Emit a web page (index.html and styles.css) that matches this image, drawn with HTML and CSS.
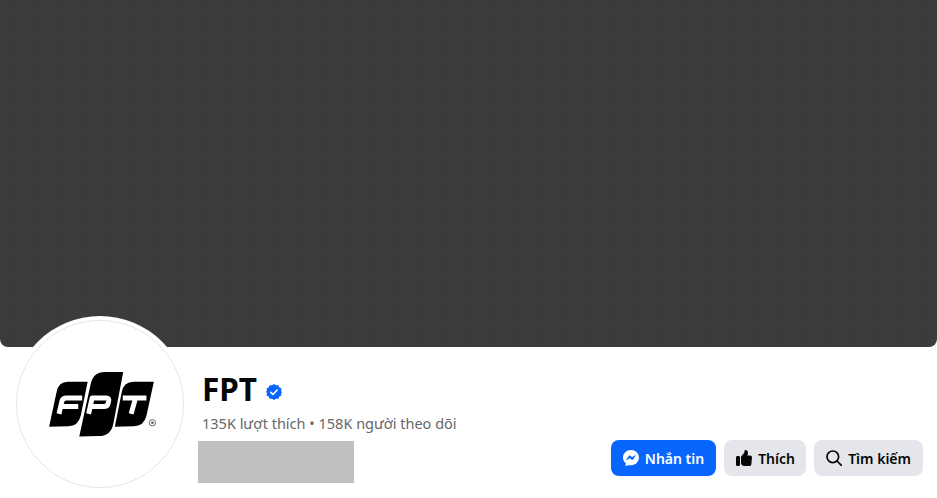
FILE: index.html
```html
<!DOCTYPE html>
<html lang="vi">
<head>
<meta charset="utf-8">
<title>FPT</title>
<link rel="stylesheet" href="styles.css">
</head>
<body>
<div class="cover"></div>
<header class="profile">
  <div class="avatar">
    <svg class="logo" viewBox="16 320 168 168" aria-label="FPT logo">
      <path class="panel" d="M48.500 427 L56 392 Q58 381.500 67.500 381.500 L87.500 381.500 L80.500 416 Q78 426.500 68 426.500 Z"/>
      <path class="panel" d="M79 437 L90.500 384 Q93 371.500 105 371.500 L123.500 371.500 L113.500 424 Q111 436.500 99 436.500 Z"/>
      <path class="panel" d="M115 427 L122 392 Q124 381.500 134 381.500 L154.500 381.500 L147 416 Q144.500 426.500 134 426.500 Z"/>
      <path class="mark" d="M58.500 414 L61.500 401 Q62.500 398 66 398 L82 398 M60.500 406.500 L78 406.500"/>
      <path class="mark" d="M88.500 414 L92 398 L106.500 398 Q109.500 398 108.800 401 L108 404 Q107.300 406.500 104 406.500 L91 406.500"/>
      <path class="mark" d="M123 398 L147 398 M136 398 L131.500 414"/>
      <circle class="reg" cx="153" cy="423" r="3.200"/>
      <circle class="reg-dot" cx="153" cy="423" r="1.300"/>
    </svg>
  </div>
  <div class="info">
    <div class="title-row">
      <h1 class="name">FPT</h1>
      <svg class="badge" viewBox="0 0 16 16" aria-label="Đã xác minh">
        <path class="badge-fill" d="M8 0 L10 1.300 L12.400 1.200 L13.400 3.400 L15.500 4.500 L15 6.900 L16 8 L15 10.100 L15.500 11.500 L13.400 12.600 L12.400 14.800 L10 14.700 L8 16 L6 14.700 L3.600 14.800 L2.600 12.600 L0.500 11.500 L1 9.100 L0 8 L1 5.900 L0.500 4.500 L2.600 3.400 L3.600 1.200 L6 1.300 Z"/>
        <path class="badge-check" d="M4.800 8.300 L7 10.400 L11.200 6"/>
      </svg>
    </div>
    <p class="stats">135K lượt thích • 158K người theo dõi</p>
    <div class="redacted"></div>
  </div>
  <div class="actions">
    <button class="btn btn-primary" type="button">
      <svg class="icon" viewBox="0 0 16 16"><path class="fill-white" d="M8 0C3.600 0 0 3.300 0 7.500c0 2.300 1 4.200 2.700 5.600v2.500c0 .3.300.5.600.4l2.500-1.100c.7.200 1.400.3 2.200.3 4.400 0 8-3.300 8-7.700C16 3.300 12.400 0 8 0z"/><path class="fill-blue" d="M3.300 9.800 5.700 6c.3-.5 1-.6 1.400-.3l1.900 1.400c.2.100.4.100.5 0l2.500-1.900c.3-.3.800.1.600.4l-2.400 3.800c-.3.500-1 .6-1.400.3L6.900 8.300c-.2-.1-.4-.1-.5 0L3.900 10.200c-.3.300-.8-.1-.6-.4z"/></svg>
      Nhắn tin
    </button>
    <button class="btn btn-like" type="button">
      <svg class="icon" viewBox="0 0 16 16"><path class="fill-dark" d="M0 7.500C0 6.700.6 6 1.400 6h1.200c.8 0 1.400.7 1.400 1.500v7c0 .8-.6 1.500-1.400 1.500H1.400C.6 16 0 15.300 0 14.500zM5 7.300c0-.5.200-.9.500-1.300l2.200-2.600c.5-.6.800-1.300.8-2.100V1c0-.6.500-1 1.100-1 1.400 0 2.400 1.200 2.400 2.700 0 .9-.3 1.900-.7 2.800h2.800c1.100 0 2 1 1.900 2.100l-.6 5.600C15.700 14.900 14.500 16 13 16H8.300c-.9 0-1.700-.3-2.400-.9-.6-.5-.9-1.200-.9-2z"/></svg>
      Thích
    </button>
    <button class="btn" type="button">
      <svg class="icon" viewBox="0 0 16 16"><circle class="stroke-dark" cx="6.800" cy="6.800" r="5.800"/><path class="stroke-dark" d="M11 11 L15.500 15.500"/></svg>
      Tìm kiếm
    </button>
  </div>
</header>
</body>
</html>
```
FILE: styles.css
```css
* { box-sizing: border-box; }
html, body { margin: 0; padding: 0; background: #fff; }
body {
  width: 937px;
  height: 498px;
  overflow: hidden;
  font-family: "Noto Sans", "Open Sans", "Liberation Sans", sans-serif;
}
.cover {
  height: 347px;
  background-color: #3b3b3b;
  background-image: conic-gradient(#3c3c3c 25%, #3a3a3a 0 50%, #3c3c3c 0 75%, #3a3a3a 0);
  background-size: 3px 3px;
  border-radius: 0 0 8px 8px;
}
.profile {
  display: flex;
  align-items: flex-start;
  padding: 0 14px 0 12px;
}
.avatar {
  flex: none;
  width: 176px;
  height: 176px;
  margin-top: -31px;
  padding: 4px;
  background: #fff;
  border-radius: 50%;
  position: relative;
}
.logo {
  display: block;
  width: 168px;
  height: 168px;
  border: 1px solid #e6e6e6;
  border-radius: 50%;
  background: #fff;
}
.panel { fill: #000; }
.mark { fill: none; stroke: #fff; stroke-width: 5; stroke-linejoin: round; }
.reg { fill: none; stroke: #444; stroke-width: .8; }
.reg-dot { fill: #555; }
.info {
  flex: none;
  width: 262px;
  margin-left: 10px;
  padding-top: 23px;
}
.title-row {
  display: flex;
  align-items: center;
  gap: 9px;
  padding-left: 4px;
  height: 38px;
}
.name {
  margin: 0;
  font-size: 31.500px;
  line-height: 38px;
  font-weight: 700;
  color: #050505;
}
.badge { width: 16px; height: 16px; margin-top: 5px; flex: none; }
.badge-fill { fill: #0866ff; }
.badge-check { fill: none; stroke: #fff; stroke-width: 1.600; stroke-linecap: round; stroke-linejoin: round; }
.stats {
  margin: 5px 0 0 4px;
  font-size: 14.500px;
  line-height: 20px;
  color: #65676b;
  white-space: nowrap;
}
.redacted {
  width: 156px;
  height: 42px;
  margin-top: 8px;
  background: #c0c0c0;
}
.actions {
  margin-left: auto;
  padding-top: 93px;
  display: flex;
  gap: 8px;
}
.btn {
  display: flex;
  align-items: center;
  gap: 6px;
  height: 36px;
  padding: 0 12px;
  border: 0;
  border-radius: 8px;
  background: #e4e6eb;
  color: #050505;
  font-family: inherit;
  font-size: 14px;
  font-weight: 600;
  white-space: nowrap;
}
.btn-like { width: 82px; padding-right: 0; }
.btn-primary { background: #0866ff; color: #fff; }
.icon { width: 16px; height: 16px; flex: none; }
.fill-white { fill: #fff; }
.fill-blue { fill: #0866ff; }
.fill-dark { fill: #050505; }
.stroke-dark { fill: none; stroke: #050505; stroke-width: 1.700; stroke-linecap: round; }
```
